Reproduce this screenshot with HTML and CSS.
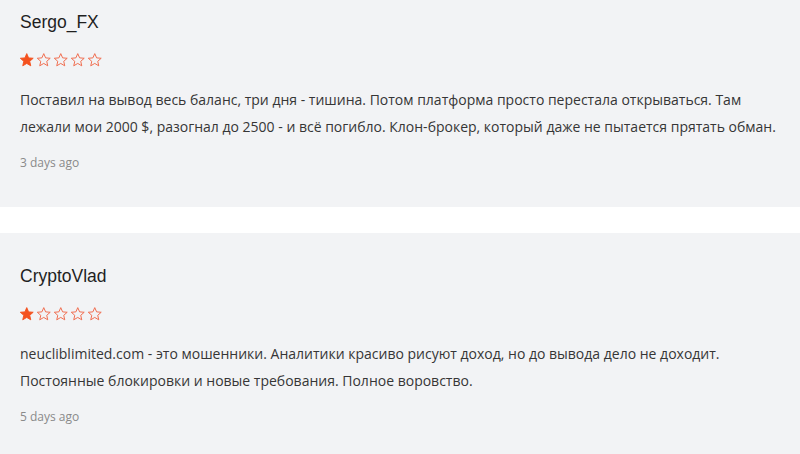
FILE: index.html
```html
<!DOCTYPE html>
<html lang="ru">
<head>
<meta charset="utf-8">
<title>Reviews</title>
<link rel="stylesheet" href="styles.css">
</head>
<body>
<div class="reviews">
  <div class="review">
    <div class="review-name">Sergo_FX</div>
    <div class="stars">
      <svg class="star" viewBox="0 0 24 24"><path class="filled" d="M12 2.5l2.9 6.6 7.1.6-5.4 4.7 1.6 7-6.2-3.7-6.2 3.7 1.6-7L2 9.7l7.1-.6z"/></svg>
      <svg class="star" viewBox="0 0 24 24"><path class="empty" d="M12 2.5l2.9 6.6 7.1.6-5.4 4.7 1.6 7-6.2-3.7-6.2 3.7 1.6-7L2 9.7l7.1-.6z"/></svg>
      <svg class="star" viewBox="0 0 24 24"><path class="empty" d="M12 2.5l2.9 6.6 7.1.6-5.4 4.7 1.6 7-6.2-3.7-6.2 3.7 1.6-7L2 9.7l7.1-.6z"/></svg>
      <svg class="star" viewBox="0 0 24 24"><path class="empty" d="M12 2.5l2.9 6.6 7.1.6-5.4 4.7 1.6 7-6.2-3.7-6.2 3.7 1.6-7L2 9.7l7.1-.6z"/></svg>
      <svg class="star" viewBox="0 0 24 24"><path class="empty" d="M12 2.5l2.9 6.6 7.1.6-5.4 4.7 1.6 7-6.2-3.7-6.2 3.7 1.6-7L2 9.7l7.1-.6z"/></svg>
    </div>
    <p class="review-text">Поставил на вывод весь баланс, три дня - тишина. Потом платформа просто перестала открываться. Там лежали мои 2000 $, разогнал до 2500 - и всё погибло. Клон-брокер, который даже не пытается прятать обман.</p>
    <div class="review-date">3 days ago</div>
  </div>
  <div class="review">
    <div class="review-name">CryptoVlad</div>
    <div class="stars">
      <svg class="star" viewBox="0 0 24 24"><path class="filled" d="M12 2.5l2.9 6.6 7.1.6-5.4 4.7 1.6 7-6.2-3.7-6.2 3.7 1.6-7L2 9.7l7.1-.6z"/></svg>
      <svg class="star" viewBox="0 0 24 24"><path class="empty" d="M12 2.5l2.9 6.6 7.1.6-5.4 4.7 1.6 7-6.2-3.7-6.2 3.7 1.6-7L2 9.7l7.1-.6z"/></svg>
      <svg class="star" viewBox="0 0 24 24"><path class="empty" d="M12 2.5l2.9 6.6 7.1.6-5.4 4.7 1.6 7-6.2-3.7-6.2 3.7 1.6-7L2 9.7l7.1-.6z"/></svg>
      <svg class="star" viewBox="0 0 24 24"><path class="empty" d="M12 2.5l2.9 6.6 7.1.6-5.4 4.7 1.6 7-6.2-3.7-6.2 3.7 1.6-7L2 9.7l7.1-.6z"/></svg>
      <svg class="star" viewBox="0 0 24 24"><path class="empty" d="M12 2.5l2.9 6.6 7.1.6-5.4 4.7 1.6 7-6.2-3.7-6.2 3.7 1.6-7L2 9.7l7.1-.6z"/></svg>
    </div>
    <p class="review-text">neucliblimited.com - это мошенники. Аналитики красиво рисуют доход, но до вывода дело не доходит. Постоянные блокировки и новые требования. Полное воровство.</p>
    <div class="review-date">5 days ago</div>
  </div>
</div>
</body>
</html>
```
FILE: styles.css
```css
html, body {
  margin: 0;
  padding: 0;
  background: #ffffff;
  overflow: hidden;
}

.reviews {
  display: flex;
  flex-direction: column;
  gap: 26px;
  margin-top: -21px;
}

.review {
  background: #f2f3f5;
  padding: 32px 20px 35px;
}

.review-name {
  font-family: "Liberation Sans", Arial, sans-serif;
  font-size: 17.5px;
  line-height: 22px;
  color: #1f1f1f;
}

.stars {
  display: flex;
  gap: 1.5px;
  margin-top: 19px;
  margin-left: -1px;
  height: 16px;
}

.star {
  width: 15.5px;
  height: 15.5px;
}

.star .filled {
  fill: #f4511e;
  stroke: #f4511e;
  stroke-width: 1.4;
  stroke-linejoin: round;
}

.star .empty {
  fill: none;
  stroke: #f06a4c;
  stroke-width: 1.5;
  stroke-linejoin: round;
}

.review-text {
  margin: 18px 0 0;
  font-family: "Open Sans", sans-serif;
  font-size: 14px;
  line-height: 27px;
  color: #363636;
}

.review-date {
  margin-top: 14px;
  font-family: "Open Sans", sans-serif;
  font-size: 12px;
  line-height: 18px;
  color: #8a8a8a;
}
```
